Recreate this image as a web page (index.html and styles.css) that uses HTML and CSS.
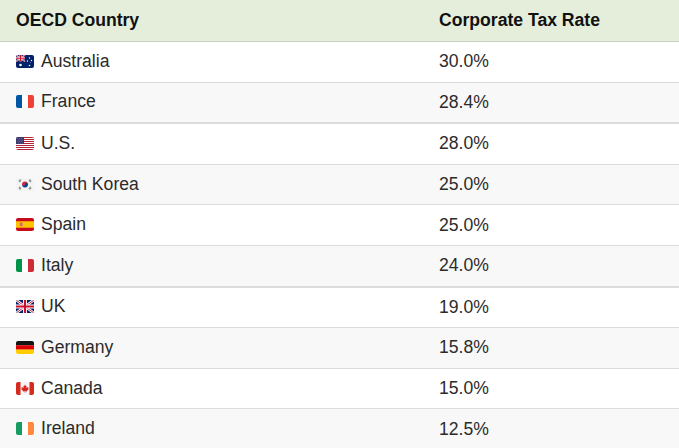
FILE: index.html
```html
<!DOCTYPE html>
<html lang="en">
<head>
<meta charset="utf-8">
<title>OECD Corporate Tax Rates</title>
<link rel="stylesheet" href="styles.css">
</head>
<body>
<table class="tax-table">
  <thead>
    <tr>
      <th class="col-country">OECD Country</th>
      <th class="col-rate">Corporate Tax Rate</th>
    </tr>
  </thead>
  <tbody>
    <tr>
      <td><span class="country"><span class="flag"><svg viewBox="0 0 18 13" width="18" height="13"><rect width="18" height="13" fill="#012169"/><g><path d="M0 0L9 6.5M9 0L0 6.5" stroke="#fff" stroke-width="1.4"/><path d="M0 0L9 6.5M9 0L0 6.5" stroke="#C8102E" stroke-width="0.6"/><path d="M4.5 0V6.5M0 3.25H9" stroke="#fff" stroke-width="2"/><path d="M4.5 0V6.5M0 3.25H9" stroke="#C8102E" stroke-width="1.1"/></g><circle cx="4.5" cy="10" r="1.3" fill="#fff"/><circle cx="13.5" cy="3" r="0.7" fill="#fff"/><circle cx="11.5" cy="6" r="0.7" fill="#fff"/><circle cx="15.5" cy="5.5" r="0.7" fill="#fff"/><circle cx="13.5" cy="10.5" r="0.8" fill="#fff"/><circle cx="14.6" cy="7.6" r="0.4" fill="#fff"/></svg></span>Australia</span></td>
      <td>30.0%</td>
    </tr>
    <tr class="alt">
      <td><span class="country"><span class="flag"><svg viewBox="0 0 18 13" width="18" height="13"><rect width="6" height="13" fill="#0055A4"/><rect x="6" width="6" height="13" fill="#fff"/><rect x="12" width="6" height="13" fill="#EF4135"/></svg></span>France</span></td>
      <td>28.4%</td>
    </tr>
    <tr class="group-start">
      <td><span class="country"><span class="flag"><svg viewBox="0 0 18 13" width="18" height="13"><rect width="18" height="13" fill="#fff"/><path d="M0 0.5H18M0 2.5H18M0 4.5H18M0 6.5H18M0 8.5H18M0 10.5H18M0 12.5H18" stroke="#B22234" stroke-width="1"/><rect width="8" height="7" fill="#3C3B6E"/><g fill="#fff" opacity="0.8"><circle cx="1.5" cy="1.5" r="0.35"/><circle cx="3.5" cy="1.5" r="0.35"/><circle cx="5.5" cy="1.5" r="0.35"/><circle cx="2.5" cy="3" r="0.35"/><circle cx="4.5" cy="3" r="0.35"/><circle cx="6.5" cy="3" r="0.35"/><circle cx="1.5" cy="4.5" r="0.35"/><circle cx="3.5" cy="4.5" r="0.35"/><circle cx="5.5" cy="4.5" r="0.35"/><circle cx="2.5" cy="6" r="0.35"/><circle cx="4.5" cy="6" r="0.35"/><circle cx="6.5" cy="6" r="0.35"/></g></svg></span>U.S.</span></td>
      <td>28.0%</td>
    </tr>
    <tr class="alt">
      <td><span class="country"><span class="flag"><svg viewBox="0 0 18 13" width="18" height="13"><rect width="18" height="13" fill="#f4f4f4"/><path d="M6.1 6.5A2.9 2.9 0 0 1 11.9 6.5Z" fill="#CD2E3A"/><path d="M6.1 6.5A2.9 2.9 0 0 0 11.9 6.5Z" fill="#0047A0"/><circle cx="7.55" cy="6.5" r="1.45" fill="#CD2E3A"/><circle cx="10.45" cy="6.5" r="1.45" fill="#0047A0"/><g stroke="#333" stroke-width="0.55"><path d="M2.6 2.9L4.4 1.5M3 3.5L4.8 2.1M3.4 4.1L5.2 2.7"/><path d="M13.6 1.5L15.4 2.9M13.2 2.1L15 3.5M12.8 2.7L14.6 4.1"/><path d="M2.6 10.1L4.4 11.5M3 9.5L4.8 10.9M3.4 8.9L5.2 10.3"/><path d="M13.6 11.5L15.4 10.1M13.2 10.9L15 9.5M12.8 10.3L14.6 8.9"/></g></svg></span>South Korea</span></td>
      <td>25.0%</td>
    </tr>
    <tr>
      <td><span class="country"><span class="flag"><svg viewBox="0 0 18 13" width="18" height="13"><rect width="18" height="13" fill="#C60B1E"/><rect y="3.25" width="18" height="6.5" fill="#FFC400"/><rect x="4" y="4.6" width="2.6" height="3.6" rx="0.6" fill="#D56A5A"/><rect x="3.3" y="4.8" width="0.6" height="3.4" fill="#C9A7A0"/><rect x="6.7" y="4.8" width="0.6" height="3.4" fill="#C9A7A0"/></svg></span>Spain</span></td>
      <td>25.0%</td>
    </tr>
    <tr class="alt">
      <td><span class="country"><span class="flag"><svg viewBox="0 0 18 13" width="18" height="13"><rect width="6" height="13" fill="#009246"/><rect x="6" width="6" height="13" fill="#fff"/><rect x="12" width="6" height="13" fill="#CE2B37"/></svg></span>Italy</span></td>
      <td>24.0%</td>
    </tr>
    <tr class="group-start">
      <td><span class="country"><span class="flag"><svg viewBox="0 0 18 13" width="18" height="13"><rect width="18" height="13" fill="#012169"/><path d="M0 0L18 13M18 0L0 13" stroke="#fff" stroke-width="2.6"/><path d="M0 0L18 13M18 0L0 13" stroke="#C8102E" stroke-width="0.9"/><path d="M9 0V13M0 6.5H18" stroke="#fff" stroke-width="4"/><path d="M9 0V13M0 6.5H18" stroke="#C8102E" stroke-width="2.2"/></svg></span>UK</span></td>
      <td>19.0%</td>
    </tr>
    <tr class="alt">
      <td><span class="country"><span class="flag"><svg viewBox="0 0 18 13" width="18" height="13"><rect width="18" height="4.4" fill="#141414"/><rect y="4.3" width="18" height="4.4" fill="#DD0000"/><rect y="8.6" width="18" height="4.4" fill="#FFCE00"/></svg></span>Germany</span></td>
      <td>15.8%</td>
    </tr>
    <tr>
      <td><span class="country"><span class="flag"><svg viewBox="0 0 18 13" width="18" height="13"><rect width="18" height="13" fill="#f5f5f5"/><rect width="4.5" height="13" fill="#D52B1E"/><rect x="13.5" width="4.5" height="13" fill="#D52B1E"/><path d="M9 2.6L9.8 4.1L10.6 3.8L10.3 6.1L11.5 5.1L11.8 5.8L12.7 5.6L12.3 7.1L12.8 7.4L10.9 8.8L11.1 9.5L9.2 9.3V11H8.8V9.3L6.9 9.5L7.1 8.8L5.2 7.4L5.7 7.1L5.3 5.6L6.2 5.8L6.5 5.1L7.7 6.1L7.4 3.8L8.2 4.1Z" fill="#D52B1E"/></svg></span>Canada</span></td>
      <td>15.0%</td>
    </tr>
    <tr class="alt">
      <td><span class="country"><span class="flag"><svg viewBox="0 0 18 13" width="18" height="13"><rect width="6" height="13" fill="#169B62"/><rect x="6" width="6" height="13" fill="#fff"/><rect x="12" width="6" height="13" fill="#FF883E"/></svg></span>Ireland</span></td>
      <td>12.5%</td>
    </tr>
  </tbody>
</table>
</body>
</html>
```

FILE: styles.css
```css
html, body {
  margin: 0;
  padding: 0;
  background: #fff;
}

body {
  font-family: "Liberation Sans", Arial, sans-serif;
  font-size: 17.6px;
  color: #2b2b2b;
}

.tax-table {
  width: 679px;
  border-collapse: collapse;
  table-layout: fixed;
}

.tax-table th,
.tax-table td {
  padding: 0 16px;
  text-align: left;
  vertical-align: middle;
  border-bottom: 1px solid #dcdcdc;
}

.tax-table th {
  height: 41px;
  background: #e5eedb;
  color: #111;
  font-weight: bold;
  border-bottom: 1px solid #c9cfc4;
}

.col-country {
  width: 391px;
}

.tax-table td {
  height: 39.6px;
}

.tax-table tr.alt td {
  background: #f8f8f8;
}

.tax-table tr.group-start td {
  border-top: 2px solid #dcdcdc;
}

.country {
  display: inline-flex;
  align-items: center;
}

.flag {
  display: inline-block;
  width: 18px;
  height: 13px;
  border-radius: 2px;
  overflow: hidden;
  margin-right: 7px;
  line-height: 0;
}

.flag svg {
  display: block;
}
```
